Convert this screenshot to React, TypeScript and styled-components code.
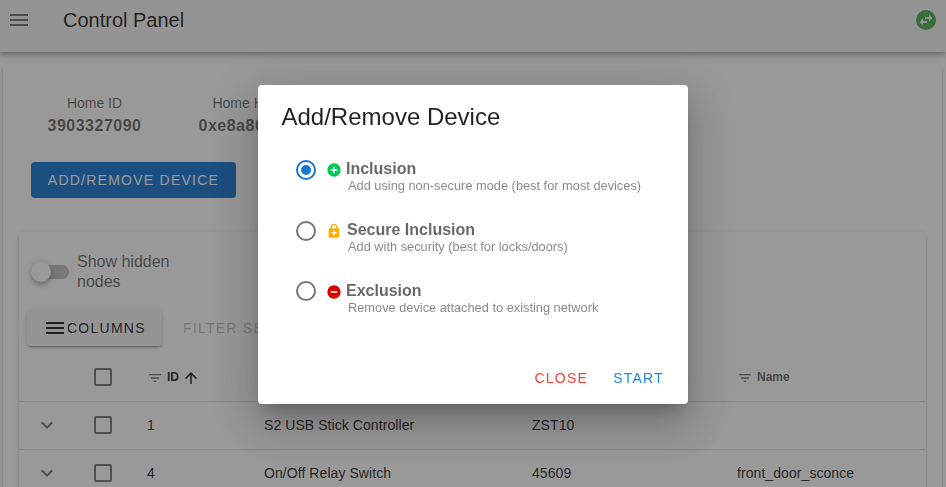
import React from "react";
import styled, { createGlobalStyle } from "styled-components";

const GlobalStyle = createGlobalStyle`
  *, *::before, *::after { box-sizing: border-box; }
  html, body { margin: 0; height: 487px; overflow: hidden; }
  body {
    background: #fff;
    color: rgba(0, 0, 0, 0.87);
    font-family: "Liberation Sans", Arial, sans-serif;
    font-size: 16px;
  }
`;

const ICONS = {
  menu: "M3,6H21V8H3V6M3,11H21V13H3V11M3,16H21V18H3V16Z",
  swap: "M22,12A10,10 0 0,1 12,22A10,10 0 0,1 2,12A10,10 0 0,1 12,2A10,10 0 0,1 22,12M15,6.5V9H11V11H15V13.5L18.5,10L15,6.5M9,17.5V15H13V13H9V10.5L5.5,14L9,17.5Z",
  filter: "M6,13H18V11H6M3,6V8H21V6M10,18H14V16H10V18Z",
  arrowUp: "M13,20H11V8L5.5,13.5L4.08,12.08L12,4.16L19.92,12.08L18.5,13.5L13,8V20Z",
  chevron: "M7.41,8.58L12,13.17L16.59,8.58L18,10L12,16L6,10L7.41,8.58Z",
  checkbox:
    "M19,3H5C3.89,3 3,3.89 3,5V19A2,2 0 0,0 5,21H19A2,2 0 0,0 21,19V5C21,3.89 20.1,3 19,3M19,5V19H5V5H19Z",
  radioOff:
    "M12,20A8,8 0 0,1 4,12A8,8 0 0,1 12,4A8,8 0 0,1 20,12A8,8 0 0,1 12,20M12,2A10,10 0 0,0 2,12A10,10 0 0,0 12,22A10,10 0 0,0 22,12A10,10 0 0,0 12,2Z",
  radioOn:
    "M12,20A8,8 0 0,1 4,12A8,8 0 0,1 12,4A8,8 0 0,1 20,12A8,8 0 0,1 12,20M12,2A10,10 0 0,0 2,12A10,10 0 0,0 12,22A10,10 0 0,0 22,12A10,10 0 0,0 12,2M12,7A5,5 0 0,0 7,12A5,5 0 0,0 12,17A5,5 0 0,0 17,12A5,5 0 0,0 12,7Z",
  plus: "M17,13H13V17H11V13H7V11H11V7H13V11H17M12,2A10,10 0 0,0 2,12A10,10 0 0,0 12,22A10,10 0 0,0 22,12A10,10 0 0,0 12,2Z",
  minus: "M17,13H7V11H17M12,2A10,10 0 0,0 2,12A10,10 0 0,0 12,22A10,10 0 0,0 22,12A10,10 0 0,0 12,2Z",
  lock: "M18,8H17V6A5,5 0 0,0 12,1A5,5 0 0,0 7,6V8H6A2,2 0 0,0 4,10V20A2,2 0 0,0 6,22H18A2,2 0 0,0 20,20V10A2,2 0 0,0 18,8M8.9,6C8.9,4.29 10.29,2.9 12,2.9C13.71,2.9 15.1,4.29 15.1,6V8H8.9V6M16,16H13V19H11V16H8V14H11V11H13V14H16V16Z",
};

const Svg = styled.svg<{ $color: string }>`
  display: block;
  flex: none;
  fill: ${(p) => p.$color};
`;

const MUTED = "rgba(0, 0, 0, 0.54)";

function Icon({ name, size = 24, color = MUTED }: { name: keyof typeof ICONS; size?: number; color?: string }) {
  return (
    <Svg width={size} height={size} viewBox="0 0 24 24" $color={color} aria-hidden>
      <path d={ICONS[name]} />
    </Svg>
  );
}

const Page = styled.div`
  display: flex;
  flex-direction: column;
  width: 946px;
  height: 487px;
  overflow: hidden;
`;

const AppBar = styled.header`
  display: flex;
  align-items: flex-start;
  flex: none;
  height: 52px;
  padding: 8px 8px 0 7px;
  background: #f5f5f5;
  z-index: 1;
  box-shadow: 0 2px 4px -1px rgba(0, 0, 0, 0.2), 0 4px 5px 0 rgba(0, 0, 0, 0.14), 0 1px 10px 0 rgba(0, 0, 0, 0.12);
`;

const AppTitle = styled.h1`
  flex: 1;
  margin: 0 0 0 32px;
  font-size: 20px;
  font-weight: 400;
  line-height: 24px;
`;

const cardShadow = `0 3px 1px -2px rgba(0, 0, 0, 0.2), 0 2px 2px 0 rgba(0, 0, 0, 0.14), 0 1px 5px 0 rgba(0, 0, 0, 0.12)`;

const Card = styled.main`
  flex: none;
  margin: 12px 4px 0 3px;
  height: 600px;
  padding: 29px 16px 0;
  border-radius: 4px;
  box-shadow: ${cardShadow};
`;

const Facts = styled.div`
  display: flex;
  gap: 56px;
  padding-left: 28px;
  height: 69px;
`;

const Fact = styled.div`
  width: 95px;
  text-align: center;
  white-space: nowrap;
  color: rgba(0, 0, 0, 0.6);
  font-size: 14px;
  line-height: 20px;
`;

const FactValue = styled.div`
  font-size: 16px;
  font-weight: 700;
  line-height: 26px;
  letter-spacing: 0.5px;
`;

const PrimaryButton = styled.button`
  display: block;
  width: 205px;
  height: 36px;
  margin-left: 12px;
  padding: 0;
  border: 0;
  border-radius: 4px;
  background: #1976d2;
  color: #fff;
  font: 400 14px "Liberation Sans", Arial, sans-serif;
  letter-spacing: 1.25px;
`;

const TableCard = styled.section`
  margin-top: 34px;
  height: 500px;
  border-radius: 4px;
  box-shadow: ${cardShadow};
`;

const SwitchRow = styled.label`
  display: flex;
  align-items: center;
  height: 77px;
  padding: 2px 0 0 12px;
  color: rgba(0, 0, 0, 0.6);
  line-height: 20px;
`;

const Track = styled.span`
  display: flex;
  align-items: center;
  width: 36px;
  height: 14px;
  margin: 0 8px 0 2px;
  border-radius: 7px;
  background: rgba(0, 0, 0, 0.24);
`;

const Knob = styled.span`
  flex: none;
  width: 20px;
  height: 20px;
  margin-left: -2px;
  border-radius: 50%;
  background: #fff;
  box-shadow: 0 2px 4px -1px rgba(0, 0, 0, 0.2), 0 4px 5px 0 rgba(0, 0, 0, 0.14), 0 1px 10px 0 rgba(0, 0, 0, 0.12);
`;

const SwitchLabel = styled.span`
  width: 110px;
`;

const Tools = styled.div`
  display: flex;
  align-items: center;
  height: 37px;
  padding-left: 8px;
  font-size: 14px;
  letter-spacing: 1.25px;
  white-space: nowrap;
`;

const ColumnsButton = styled.div`
  display: flex;
  align-items: center;
  width: 135px;
  height: 36px;
  padding-left: 16px;
  border-radius: 4px;
  background: #f5f5f5;
  box-shadow: ${cardShadow};
`;

const FilterText = styled.div`
  margin-left: 21px;
  color: rgba(0, 0, 0, 0.26);
`;

const TableRow = styled.div<{ $head?: boolean }>`
  display: grid;
  grid-template-columns: 56px 56px 117px 268px 205px 1fr;
  align-items: center;
  height: ${(p) => (p.$head ? 56 : 48)}px;
  padding: ${(p) => (p.$head ? "7px 0 0" : "0 0 1px")};
  border-bottom: 1px solid rgba(0, 0, 0, 0.12);
  font-size: ${(p) => (p.$head ? 12 : 14)}px;
  font-weight: ${(p) => (p.$head ? 700 : 400)};
  letter-spacing: ${(p) => (p.$head ? 0 : 0.07)}px;
`;

const IconCell = styled.div`
  display: flex;
  justify-content: center;
`;

const Cell = styled.div`
  padding-left: 16px;
`;

const HeadCell = styled.div<{ $active?: boolean }>`
  display: flex;
  align-items: center;
  gap: 4px;
  padding-left: 16px;
  color: ${(p) => (p.$active ? "rgba(0, 0, 0, 0.87)" : "rgba(0, 0, 0, 0.6)")};
`;

const FilterMark = styled.span`
  padding-top: 1px;
`;

const SortMark = styled.span`
  margin-left: -1px;
  padding-top: 1px;
`;

const Overlay = styled.div`
  position: fixed;
  inset: 0;
  z-index: 2;
  display: flex;
  justify-content: center;
  align-items: flex-start;
  padding-top: 85px;
  background: rgba(33, 33, 33, 0.46);
`;

const Dialog = styled.div`
  display: flex;
  flex-direction: column;
  width: 430px;
  height: 319px;
  border-radius: 4px;
  background: #fff;
  box-shadow: 0 11px 15px -7px rgba(0, 0, 0, 0.2), 0 24px 38px 3px rgba(0, 0, 0, 0.14),
    0 9px 46px 8px rgba(0, 0, 0, 0.12);
`;

const DialogTitle = styled.h2`
  margin: 0;
  padding: 16px 24px 0 23.5px;
  font-size: 24px;
  font-weight: 400;
  line-height: 32px;
`;

const Options = styled.div`
  display: flex;
  flex-direction: column;
  flex: 1;
  padding: 25px 0 0 35.5px;
`;

const Option = styled.div`
  display: grid;
  grid-template-columns: 32px 20.5px auto;
  justify-content: start;
  align-items: start;
  height: 61px;

  &:last-child > svg {
    margin-top: -1px;
  }
`;

const OptionIcon = styled.div`
  padding-top: 4px;
`;

const OptionText = styled.div`
  display: flex;
  flex-direction: column;
  padding-top: 1px;
  white-space: nowrap;
`;

const OptionName = styled.div<{ $indent: number }>`
  padding-left: ${(p) => p.$indent}px;
  height: 19px;
  color: rgba(0, 0, 0, 0.6);
  font-size: 16px;
  font-weight: 700;
  line-height: 20px;
`;

const OptionHint = styled.div`
  padding-left: 2px;
  color: rgba(0, 0, 0, 0.48);
  font-size: 12.8px;
  line-height: 16px;
`;

const Actions = styled.div`
  display: flex;
  justify-content: flex-end;
  gap: 25px;
  height: 34px;
  padding-right: 24px;
  font-size: 14px;
  letter-spacing: 1.25px;
`;

const Action = styled.span<{ $color: string }>`
  color: ${(p) => p.$color};
`;

const options = [
  { name: "Inclusion", hint: "Add using non-secure mode (best for most devices)", icon: "plus", color: "#00c853", indent: 0 },
  { name: "Secure Inclusion", hint: "Add with security (best for locks/doors)", icon: "lock", color: "#ffab00", indent: 1 },
  { name: "Exclusion", hint: "Remove device attached to existing network", icon: "minus", color: "#d50000", indent: 0 },
] as const;

const rows = [
  { id: 1, product: "S2 USB Stick Controller", code: "ZST10", name: "" },
  { id: 4, product: "On/Off Relay Switch", code: "45609", name: "front_door_sconce" },
];

export default function App() {
  return (
    <Page>
      <GlobalStyle />
      <AppBar>
        <Icon name="menu" />
        <AppTitle>Control Panel</AppTitle>
        <Icon name="swap" color="#4caf50" />
      </AppBar>
      <Card>
        <Facts>
          <Fact>
            Home ID
            <FactValue>3903327090</FactValue>
          </Fact>
          <Fact>
            Home Hex
            <FactValue>0xe8a80c52</FactValue>
          </Fact>
        </Facts>
        <PrimaryButton>ADD/REMOVE DEVICE</PrimaryButton>
        <TableCard>
          <SwitchRow>
            <Track>
              <Knob />
            </Track>
            <SwitchLabel>Show hidden nodes</SwitchLabel>
          </SwitchRow>
          <Tools>
            <ColumnsButton>
              <Icon name="menu" color="rgba(0, 0, 0, 0.87)" />
              COLUMNS
            </ColumnsButton>
            <FilterText>FILTER SETTINGS</FilterText>
          </Tools>
          <TableRow $head>
            <span />
            <IconCell>
              <Icon name="checkbox" />
            </IconCell>
            <HeadCell $active>
              <FilterMark>
                <Icon name="filter" size={16} />
              </FilterMark>
              ID
              <SortMark>
                <Icon name="arrowUp" size={18} color="rgba(0, 0, 0, 0.87)" />
              </SortMark>
            </HeadCell>
            <HeadCell />
            <HeadCell />
            <HeadCell>
              <FilterMark>
                <Icon name="filter" size={16} />
              </FilterMark>
              Name
            </HeadCell>
          </TableRow>
          {rows.map((row) => (
            <TableRow key={row.id}>
              <IconCell>
                <Icon name="chevron" />
              </IconCell>
              <IconCell>
                <Icon name="checkbox" />
              </IconCell>
              <Cell>{row.id}</Cell>
              <Cell>{row.product}</Cell>
              <Cell>{row.code}</Cell>
              <Cell>{row.name}</Cell>
            </TableRow>
          ))}
        </TableCard>
      </Card>
      <Overlay>
        <Dialog role="dialog">
          <DialogTitle>Add/Remove Device</DialogTitle>
          <Options>
            {options.map((option, index) => (
              <Option key={option.name}>
                <Icon name={index === 0 ? "radioOn" : "radioOff"} color={index === 0 ? "#1976d2" : MUTED} />
                <OptionIcon>
                  <Icon name={option.icon} size={16} color={option.color} />
                </OptionIcon>
                <OptionText>
                  <OptionName $indent={option.indent}>{option.name}</OptionName>
                  <OptionHint>{option.hint}</OptionHint>
                </OptionText>
              </Option>
            ))}
          </Options>
          <Actions>
            <Action $color="#f44336">CLOSE</Action>
            <Action $color="#1e88e5">START</Action>
          </Actions>
        </Dialog>
      </Overlay>
    </Page>
  );
}
